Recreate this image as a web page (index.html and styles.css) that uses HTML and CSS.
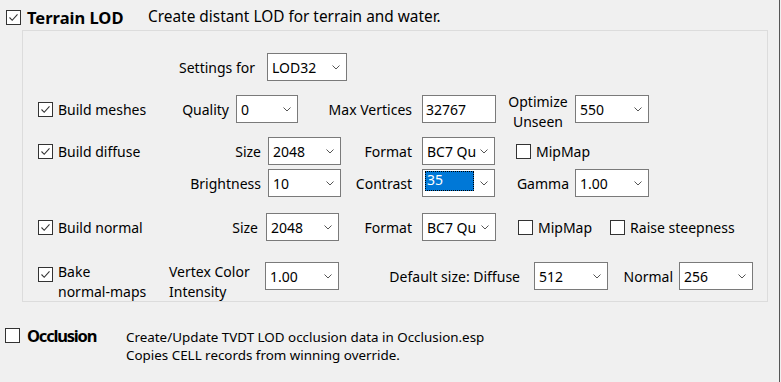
FILE: index.html
```html
<!DOCTYPE html>
<html lang="en">
<head>
    <meta charset="UTF-8">
    <meta name="viewport" content="width=device-width, initial-scale=1.0">
    <link rel="stylesheet" href="styles.css">
    <title>Terrain LOD</title>
</head>
<body>
    <div class="ventana">
        <div class="cabecera">
            <span class="caja on"><svg viewBox="0 0 13 13"><polyline points="2.5,6.5 5.2,9.3 10.5,3.3"/></svg></span>
            <span class="titulo">Terrain LOD</span>
            <span class="desc">Create distant LOD for terrain and water.</span>
        </div>

        <div class="panel">
            <div class="fila f0">
                <span class="lbl c-settings">Settings for</span>
                <div class="dd w80"><span>LOD32</span><svg class="chev" viewBox="0 0 8 5"><polyline points="0.5,0.5 4,4 7.5,0.5"/></svg></div>
            </div>

            <div class="fila f1">
                <label class="check c-meshes"><span class="caja on"><svg viewBox="0 0 13 13"><polyline points="2.5,6.5 5.2,9.3 10.5,3.3"/></svg></span>Build meshes</label>
                <span class="lbl c-quality">Quality</span>
                <div class="dd w62"><span>0</span><svg class="chev" viewBox="0 0 8 5"><polyline points="0.5,0.5 4,4 7.5,0.5"/></svg></div>
                <span class="lbl c-maxv">Max Vertices</span>
                <div class="txt w74">32767</div>
                <span class="lbl c-optim">Optimize<br>Unseen</span>
                <div class="dd w74"><span>550</span><svg class="chev" viewBox="0 0 8 5"><polyline points="0.5,0.5 4,4 7.5,0.5"/></svg></div>
            </div>

            <div class="fila f2">
                <label class="check c-diffuse"><span class="caja on"><svg viewBox="0 0 13 13"><polyline points="2.5,6.5 5.2,9.3 10.5,3.3"/></svg></span>Build diffuse</label>
                <span class="lbl c-size">Size</span>
                <div class="dd w73"><span>2048</span><svg class="chev" viewBox="0 0 8 5"><polyline points="0.5,0.5 4,4 7.5,0.5"/></svg></div>
                <span class="lbl c-format">Format</span>
                <div class="dd w73"><span>BC7 Qu</span><svg class="chev" viewBox="0 0 8 5"><polyline points="0.5,0.5 4,4 7.5,0.5"/></svg></div>
                <label class="check m-mip"><span class="caja"></span>MipMap</label>
            </div>

            <div class="fila f3">
                <span class="lbl c-bright">Brightness</span>
                <div class="dd w73"><span>10</span><svg class="chev" viewBox="0 0 8 5"><polyline points="0.5,0.5 4,4 7.5,0.5"/></svg></div>
                <span class="lbl c-format">Contrast</span>
                <div class="dd w73"><span class="elegido">35</span><svg class="chev" viewBox="0 0 8 5"><polyline points="0.5,0.5 4,4 7.5,0.5"/></svg></div>
                <span class="lbl c-gamma">Gamma</span>
                <div class="dd w74"><span>1.00</span><svg class="chev" viewBox="0 0 8 5"><polyline points="0.5,0.5 4,4 7.5,0.5"/></svg></div>
            </div>

            <div class="fila f4">
                <label class="check c-normal"><span class="caja on"><svg viewBox="0 0 13 13"><polyline points="2.5,6.5 5.2,9.3 10.5,3.3"/></svg></span>Build normal</label>
                <span class="lbl c-size2">Size</span>
                <div class="dd w73"><span>2048</span><svg class="chev" viewBox="0 0 8 5"><polyline points="0.5,0.5 4,4 7.5,0.5"/></svg></div>
                <span class="lbl c-format2">Format</span>
                <div class="dd w74"><span>BC7 Qu</span><svg class="chev" viewBox="0 0 8 5"><polyline points="0.5,0.5 4,4 7.5,0.5"/></svg></div>
                <label class="check m-mip2"><span class="caja"></span>MipMap</label>
                <label class="check m-raise"><span class="caja"></span>Raise steepness</label>
            </div>

            <div class="fila f5">
                <label class="check doble c-bake"><span class="caja on"><svg viewBox="0 0 13 13"><polyline points="2.5,6.5 5.2,9.3 10.5,3.3"/></svg></span><span>Bake<br>normal-maps</span></label>
                <span class="lbl doble c-vertex">Vertex Color<br>Intensity</span>
                <div class="dd w74"><span>1.00</span><svg class="chev" viewBox="0 0 8 5"><polyline points="0.5,0.5 4,4 7.5,0.5"/></svg></div>
                <span class="lbl centro c-default">Default size: Diffuse</span>
                <div class="dd w74"><span>512</span><svg class="chev" viewBox="0 0 8 5"><polyline points="0.5,0.5 4,4 7.5,0.5"/></svg></div>
                <span class="lbl centro c-normal2">Normal</span>
                <div class="dd w74"><span>256</span><svg class="chev" viewBox="0 0 8 5"><polyline points="0.5,0.5 4,4 7.5,0.5"/></svg></div>
            </div>
        </div>

        <div class="oclusion">
            <span class="caja"></span>
            <span class="titulo t-occl">Occlusion</span>
            <span class="desc">Create/Update TVDT LOD occlusion data in Occlusion.esp<br>Copies CELL records from winning override.</span>
        </div>
    </div>
</body>
</html>
```

FILE: styles.css
```css
* {
    margin: 0;
    padding: 0;
    box-sizing: border-box;
}
body {
    background-color: #f0f0f0;
    font-family: 'Noto Sans', 'Open Sans', sans-serif;
    font-size: 14px;
    color: #000;
}
.ventana {
    width: 780px;
    min-height: 100vh;
    border-right: 1px solid #555;
}

/* cabecera y pie */
.cabecera {
    display: flex;
    align-items: center;
    padding: 6px 0 0 6px;
    height: 28px;
}
.cabecera .caja {
    margin-top: 1px;
}
.cabecera .desc {
    font-size: 15.4px;
    margin-top: -2px;
}
.titulo {
    font-weight: bold;
    font-size: 16.5px;
    margin-left: 6px;
    width: 121px;
}
.oclusion {
    display: flex;
    align-items: flex-start;
    padding: 25px 0 0 5px;
}
.oclusion .caja {
    margin-top: 1px;
}
.t-occl {
    margin-left: 7px;
    width: 99px;
    line-height: 18px;
    letter-spacing: -1.2px;
}
.oclusion .desc {
    font-size: 13.4px;
    line-height: 18px;
    margin-top: 1px;
}

/* casillas */
.caja {
    display: inline-flex;
    flex: 0 0 15px;
    width: 15px;
    height: 15px;
    border: 1px solid #333;
    background-color: #fff;
}
.caja svg {
    width: 13px;
    height: 13px;
    fill: none;
    stroke: #333;
    stroke-width: 1.1;
}
.check {
    display: flex;
    align-items: center;
    gap: 5px;
}

/* panel */
.panel {
    margin: 2px 0 0 22px;
    width: 746px;
    height: 272px;
    border: 1px solid #dcdcdc;
    padding: 22px 0 0 15px;
}
.fila {
    display: flex;
    align-items: center;
    height: 28px;
}
.f1 { margin-top: 14px; }
.f2 { margin-top: 14px; }
.f3 { margin-top: 4px; }
.f4 { margin-top: 16px; }
.f5 { margin-top: 21px; align-items: flex-start; }

.lbl {
    text-align: right;
    flex: none;
}
.c-settings { width: 229px; padding-right: 12px; }
.c-meshes { width: 142px; }
.c-quality { width: 56px; padding-right: 7px; }
.c-maxv { width: 124px; padding-right: 10px; }
.c-optim {
    width: 79px;
    padding: 0 5px 0 10px;
    text-align: center;
    line-height: 20px;
    margin-top: 5px;
}
.c-diffuse { width: 150px; }
.c-size { width: 80px; padding-right: 7px; }
.c-format { width: 81px; padding-right: 10px; }
.m-mip { margin-left: 21px; }
.c-bright { width: 230px; padding-right: 7px; }
.c-gamma { width: 80px; padding-right: 6px; }
.c-normal { width: 148px; }
.c-size2 { width: 80px; padding-right: 8px; }
.c-format2 { width: 83px; padding-right: 10px; }
.m-mip2 { margin-left: 22px; }
.m-raise { margin-left: 18px; }

.doble { line-height: 20px; }
.c-bake {
    width: 131px;
    align-items: flex-start;
}
.c-bake .caja { margin-top: 5px; }
.c-vertex { width: 96px; text-align: left; }
.centro { align-self: center; }
.c-default { width: 195px; padding-right: 14px; }
.c-normal2 { width: 71px; padding-right: 6px; }

/* desplegables y texto */
.dd, .txt {
    flex: none;
    height: 28px;
    border: 1px solid #7a7a7a;
    background-color: #fff;
    display: flex;
    align-items: center;
    padding-left: 4px;
    position: relative;
}
.txt { padding-left: 3px; }
.chev {
    position: absolute;
    right: 6px;
    top: 11px;
    width: 8px;
    height: 5px;
    fill: none;
    stroke: #555;
    stroke-width: 1;
}
.elegido {
    align-self: flex-start;
    margin: 1px 0 0 -2px;
    width: 49px;
    height: 20px;
    line-height: 18px;
    padding-left: 2px;
    background-color: #0078d7;
    color: #fff;
    outline: 1px dotted #000;
    outline-offset: -1px;
}
.w62 { width: 62px; }
.w73 { width: 73px; }
.w74 { width: 74px; }
.w80 { width: 80px; }
```
